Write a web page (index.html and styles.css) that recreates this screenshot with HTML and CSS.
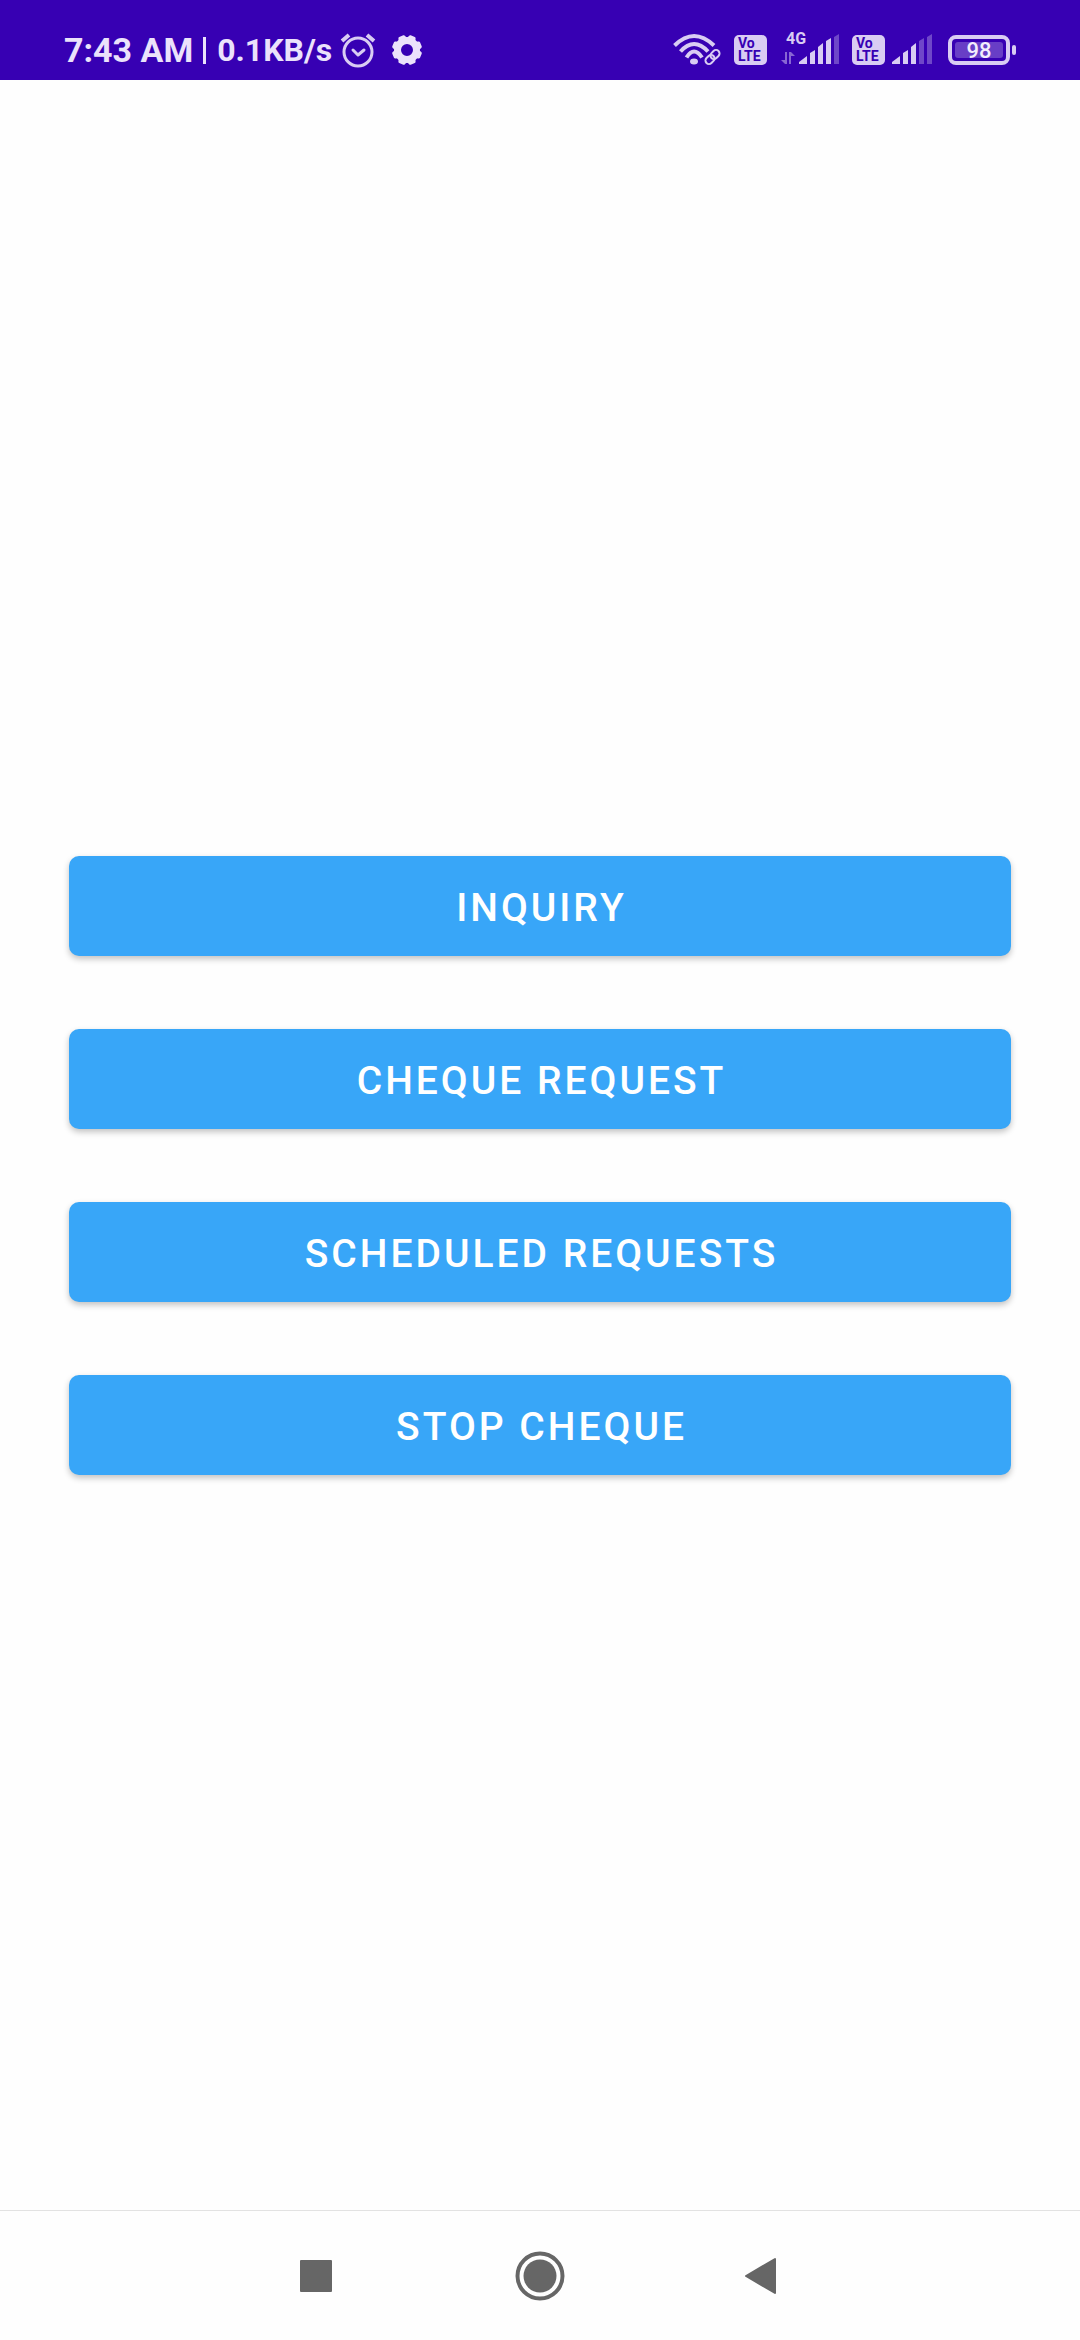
FILE: index.html
```html
<!DOCTYPE html>
<html lang="en">
<head>
<meta charset="utf-8">
<meta name="viewport" content="width=device-width, initial-scale=1">
<title>Cheque services</title>
<link rel="stylesheet" href="styles.css">
</head>
<body>
<header class="status">
  <div class="status-left">
    <span class="clock">7:43 AM</span>
    <span class="divider"></span>
    <span class="speed">0.1KB/s</span>
    <svg class="alarm" width="36" height="36" viewBox="0 0 36 36" fill="none" stroke="currentColor" stroke-width="3" stroke-linecap="round" stroke-linejoin="round" aria-hidden="true">
      <circle cx="18" cy="20" r="14"/>
      <path d="M13 18l5 5 6-5" />
      <path d="M2 9l7-6M27 3l7 6" stroke-linecap="butt" stroke-width="4"/>
    </svg>
    <svg class="gear" width="30" height="30" viewBox="0 0 30 30" aria-hidden="true">
      <g fill="currentColor">
        <path fill-rule="evenodd" d="M15 2a13 13 0 1 0 0 26a13 13 0 1 0 0-26zM15 9a6 6 0 1 1 0 12a6 6 0 1 1 0-12z"/>
        <path id="tooth" d="M10.500 4l1-3q.3-1 1.300-1h4.400q1 0 1.300 1l1 3z" transform="rotate(22.500 15 15)"/>
        <use href="#tooth" transform="rotate(45 15 15)"/>
        <use href="#tooth" transform="rotate(90 15 15)"/>
        <use href="#tooth" transform="rotate(135 15 15)"/>
        <use href="#tooth" transform="rotate(180 15 15)"/>
        <use href="#tooth" transform="rotate(225 15 15)"/>
        <use href="#tooth" transform="rotate(270 15 15)"/>
        <use href="#tooth" transform="rotate(315 15 15)"/>
      </g>
    </svg>
  </div>
  <div class="status-right">
    <svg class="wifi" width="48" height="32" viewBox="0 0 48 32" fill="none" stroke="currentColor" aria-hidden="true">
      <g stroke-width="4">
        <path d="M1.500 11.500Q21 -7.500 41 11.500"/>
        <path d="M7.500 17.500Q21 2.500 35 17.500"/>
        <path d="M13.500 23.500Q21 11.500 29 23.500"/>
      </g>
      <ellipse cx="21" cy="27.500" rx="4" ry="3" fill="currentColor" stroke="none"/>
      <g transform="rotate(-45 39.500 23)" stroke-width="2">
        <rect x="31" y="19.500" width="10" height="7" rx="3.500"/>
        <rect x="38" y="19.500" width="10" height="7" rx="3.500"/>
      </g>
    </svg>
    <svg class="volte" width="33" height="30" viewBox="0 0 33 30" role="img" aria-label="VoLTE">
      <rect width="33" height="30" rx="5" fill="currentColor"/>
      <text class="volte-text" x="4" y="13">Vo</text>
      <text class="volte-text" x="4" y="26">LTE</text>
    </svg>
    <svg class="mobile" width="58" height="34" viewBox="0 0 58 34" fill="currentColor" role="img" aria-label="4G signal">
      <text class="network-text" x="5" y="11">4G</text>
      <path opacity=".5" d="M4 19h2v12H4L0 27h4zM8 31V19h2l4 4h-4v8z"/>
      <path d="M18 29l8-6v8h-8zM29 20l5-3v14h-5zM37 14l5-4v21h-5zM45 8l5-3v26h-5z"/>
      <path opacity=".35" d="M53 4l5-3v30h-5z"/>
    </svg>
    <svg class="volte" width="33" height="30" viewBox="0 0 33 30" role="img" aria-label="VoLTE">
      <rect width="33" height="30" rx="5" fill="currentColor"/>
      <text class="volte-text" x="4" y="13">Vo</text>
      <text class="volte-text" x="4" y="26">LTE</text>
    </svg>
    <svg class="signal" width="40" height="34" viewBox="0 0 40 34" fill="currentColor" aria-hidden="true">
      <path d="M0 29l8-6v8H0zM11 20l5-3v14h-5zM19 14l5-4v21h-5z"/>
      <path opacity=".35" d="M27 8l5-3v26h-5zM35 4l5-3v30h-5z"/>
    </svg>
    <svg class="battery" width="68" height="30" viewBox="0 0 68 30" role="img" aria-label="Battery 98%">
      <rect x="2" y="2" width="58" height="26" rx="6" fill="none" stroke="currentColor" stroke-width="4"/>
      <rect x="7" y="7" width="48" height="16" rx="3" fill="currentColor" opacity=".3"/>
      <rect x="64" y="10" width="4" height="10" rx="2" fill="currentColor"/>
      <text class="battery-text" x="31" y="23" text-anchor="middle">98</text>
    </svg>
  </div>
</header>
<main class="menu">
  <button class="action" type="button">INQUIRY</button>
  <button class="action" type="button">CHEQUE REQUEST</button>
  <button class="action" type="button">SCHEDULED REQUESTS</button>
  <button class="action" type="button">STOP CHEQUE</button>
</main>
<nav class="system-nav" aria-label="System">
  <button class="nav-key" type="button" aria-label="Recent apps">
    <svg width="50" height="50" viewBox="0 0 50 50" fill="currentColor"><rect x="9" y="9" width="32" height="32" rx="1"/></svg>
  </button>
  <button class="nav-key" type="button" aria-label="Home">
    <svg width="50" height="50" viewBox="0 0 50 50"><circle cx="25" cy="25" r="22.500" fill="none" stroke="currentColor" stroke-width="4"/><circle cx="25" cy="25" r="16.500" fill="currentColor"/></svg>
  </button>
  <button class="nav-key" type="button" aria-label="Back">
    <svg width="50" height="50" viewBox="0 0 50 50" fill="currentColor" stroke="currentColor" stroke-width="2" stroke-linejoin="round"><path d="M7 25L36 8v34z"/></svg>
  </button>
</nav>
</body>
</html>
```

FILE: styles.css
```css
* {
  box-sizing: border-box;
}

body {
  margin: 0;
  min-height: 100vh;
  display: flex;
  flex-direction: column;
  background: #fefefe;
  font-family: Roboto, "Liberation Sans", sans-serif;
}

button {
  border: 0;
  padding: 0;
  font-family: inherit;
  cursor: pointer;
}

svg {
  display: block;
  flex: none;
  overflow: visible;
}

.status {
  display: flex;
  justify-content: space-between;
  height: 80px;
  padding: 20px 64px 0;
  background: #3700b3;
  color: #ebe2fb;
}

.status-left,
.status-right {
  display: flex;
  align-items: center;
  height: 60px;
}

.status-right {
  color: #d9ccf3;
}

.clock {
  font-size: 34px;
  font-weight: 700;
  line-height: 40px;
}

.divider {
  width: 3px;
  height: 27px;
  margin: 0 11px 0 10px;
  background: currentColor;
}

.speed {
  font-size: 32px;
  font-weight: 700;
  line-height: 40px;
}

.alarm {
  margin-left: 8px;
  color: #d9ccf3;
}

.gear {
  margin-left: 16px;
}

.volte {
  margin-left: 13px;
}

.mobile {
  margin-left: 14px;
}

.signal {
  margin-left: 7px;
}

.battery {
  margin-left: 16px;
}

.volte-text {
  font-size: 14px;
  font-weight: 700;
  fill: #3700b3;
}

.network-text {
  font-size: 16px;
  font-weight: 700;
}

.battery-text {
  font-size: 22px;
  font-weight: 500;
  fill: #f3edfd;
}

.menu {
  flex: 1;
  display: flex;
  flex-direction: column;
  justify-content: center;
  gap: 73px;
  padding: 41px 69px 0;
}

.action {
  height: 100px;
  padding: 4px 0 0 3px;
  border-radius: 10px;
  background: #38a6f8;
  box-shadow: 0 3px 6px rgba(0, 0, 0, 0.24);
  color: #fff;
  font-size: 39px;
  font-weight: 500;
  letter-spacing: 3px;
  line-height: 46px;
}

.system-nav {
  display: grid;
  grid-template-columns: repeat(3, 224px);
  justify-content: center;
  align-items: center;
  height: 130px;
  border-top: 1px solid #e2e2e2;
}

.nav-key {
  display: flex;
  justify-content: center;
  background: none;
  color: #666;
}
```
